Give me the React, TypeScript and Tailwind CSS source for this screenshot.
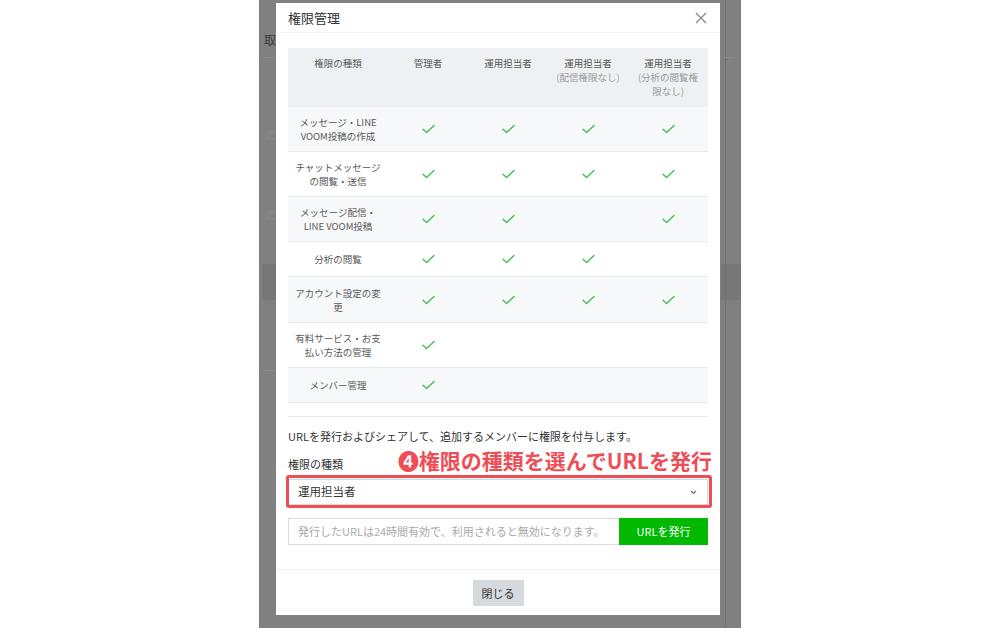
import React from "react";

const F = { fontFamily: '"Noto Sans CJK JP", "Noto Sans", sans-serif' };

type Row = { label: string[]; checks: boolean[]; h: string };

const rows: Row[] = [
  { label: ["メッセージ・LINE", "VOOM投稿の作成"], checks: [true, true, true, true], h: "h-[45px]" },
  { label: ["チャットメッセージ", "の閲覧・送信"], checks: [true, true, true, true], h: "h-[45px]" },
  { label: ["メッセージ配信・", "LINE VOOM投稿"], checks: [true, true, false, true], h: "h-[45px]" },
  { label: ["分析の閲覧"], checks: [true, true, true, false], h: "h-[35px]" },
  { label: ["アカウント設定の変", "更"], checks: [true, true, true, true], h: "h-[46px]" },
  { label: ["有料サービス・お支", "払い方法の管理"], checks: [true, false, false, false], h: "h-[45px]" },
  { label: ["メンバー管理"], checks: [true, false, false, false], h: "h-[35px]" },
];

function Check() {
  return (
    <svg width="13" height="10" viewBox="0 0 13 10" fill="none">
      <path d="M1 5.2 L4.6 8.6 L12 1.4" stroke="#4cbb5a" strokeWidth="1.4" strokeLinecap="round" strokeLinejoin="round" />
    </svg>
  );
}

export default function App() {
  return (
    <div className="w-[1000px] h-[628px] bg-white flex justify-center overflow-hidden" style={F}>
      <div className="relative w-[482px] h-[628px] bg-[#808080] pl-[17px] pt-[3px]">
        {/* ghost page content under the overlay */}
        <div className="absolute left-[5px] top-[31px] text-[12px] text-[#3a3a3a]">取</div>
        <div className="absolute left-[4px] top-[57px] w-[12px] h-px bg-[#8c8c8c]" />
        <div className="absolute left-[6px] top-[126px] text-[12px] text-[#8a8a8a]">の</div>
        <div className="absolute left-[6px] top-[206px] text-[12px] text-[#8a8a8a]">の</div>
        <div className="absolute left-[3px] top-[264px] w-[14px] h-[36px] bg-[#777]" />
        <div className="absolute right-0 top-[264px] w-[20px] h-[36px] bg-[#777]" />
        <div className="absolute right-[15px] top-0 w-px h-[628px] bg-[#727272]" />
        <div className="absolute right-[9px] top-[57px] w-[8px] h-px bg-[#8c8c8c]" />
        <div className="absolute left-[4px] top-[370px] w-[12px] h-px bg-[#8c8c8c]" />

        <div className="relative w-[444px] h-[612px] bg-white flex flex-col">
          {/* header */}
          <div className="h-[30px] px-3 flex items-center justify-between border-b border-[#f6f6f6]">
            <span className="text-[13px] text-[#333]">権限管理</span>
            <svg width="12" height="12" viewBox="0 0 12 12" className="mr-[1px]">
              <path d="M1 1 L11 11 M11 1 L1 11" stroke="#888" strokeWidth="1.3" />
            </svg>
          </div>

          <div className="px-3 pt-[15px]">
            {/* table */}
            <div className="w-[420px] text-[9.5px] text-[#595959] leading-[14px]">
              <div className="h-[59px] bg-[#eef0f3] flex pt-[8px] text-center">
                <div className="w-[100px]">権限の種類</div>
                <div className="w-[80px]">管理者</div>
                <div className="w-[80px]">運用担当者</div>
                <div className="w-[80px]">
                  運用担当者
                  <div className="text-[#9a9a9a]">(配信権限なし)</div>
                </div>
                <div className="w-[80px] px-[8px]">
                  運用担当者
                  <div className="text-[#9a9a9a]">(分析の閲覧権限なし)</div>
                </div>
              </div>
              {rows.map((r, i) => (
                <div
                  key={i}
                  className={`${r.h} flex items-center text-center border-b border-[#e9eaec] ${i % 2 === 0 ? "bg-[#f7f8f9]" : "bg-white"}`}
                >
                  <div className="w-[100px]">
                    {r.label.map((l, j) => (
                      <div key={j}>{l}</div>
                    ))}
                  </div>
                  {r.checks.map((c, j) => (
                    <div key={j} className="w-[80px] flex justify-center">
                      {c ? <Check /> : null}
                    </div>
                  ))}
                </div>
              ))}
            </div>

            <div className="mt-[13px] border-t border-[#e8e8e8]" />

            <div className="mt-[10px] text-[11px] leading-[18px] text-[#333]">
              URLを発行およびシェアして、追加するメンバーに権限を付与します。
            </div>

            <div className="relative mt-[12px] h-[15px] text-[11px] leading-[15px] text-[#333]">
              権限の種類
              <div className="absolute right-[-4px] top-[-10px] text-[21px] leading-[26px] font-bold text-[#ef4d55] whitespace-nowrap">
                ❹権限の種類を選んでURLを発行
              </div>
            </div>

            <div className="relative mt-[7px]">
              <div className="h-[26px] border border-[#d8d8d8] flex items-center justify-between pl-[9px] pr-[10px] text-[11.5px] text-[#333]">
                <span>運用担当者</span>
                <svg width="7" height="5" viewBox="0 0 7 5">
                  <path d="M1 1 L3.5 3.5 L6 1" stroke="#666" strokeWidth="1.1" fill="none" />
                </svg>
              </div>
              <div className="absolute left-[-2px] right-[-4px] top-[-4px] bottom-[-3px] border-[3px] border-[#ef4d55] rounded-[3px]" />
            </div>

            <div className="mt-[13px] h-[27px] flex">
              <div className="flex-1 border border-[#dcdcdc] border-r-0 flex items-center pl-[9px] text-[11px] text-[#aaa]">
                発行したURLは24時間有効で、利用されると無効になります。
              </div>
              <div className="w-[89px] bg-[#00b900] text-white text-[11px] flex items-center justify-center">
                URLを発行
              </div>
            </div>
          </div>

          <div className="mt-[24px] border-t border-[#eeeeee] flex justify-center pt-[10px]">
            <div className="w-[51px] h-[26px] bg-[#d6d9dd] text-[11px] text-[#333] flex items-center justify-center">
              閉じる
            </div>
          </div>
        </div>
      </div>
    </div>
  );
}
